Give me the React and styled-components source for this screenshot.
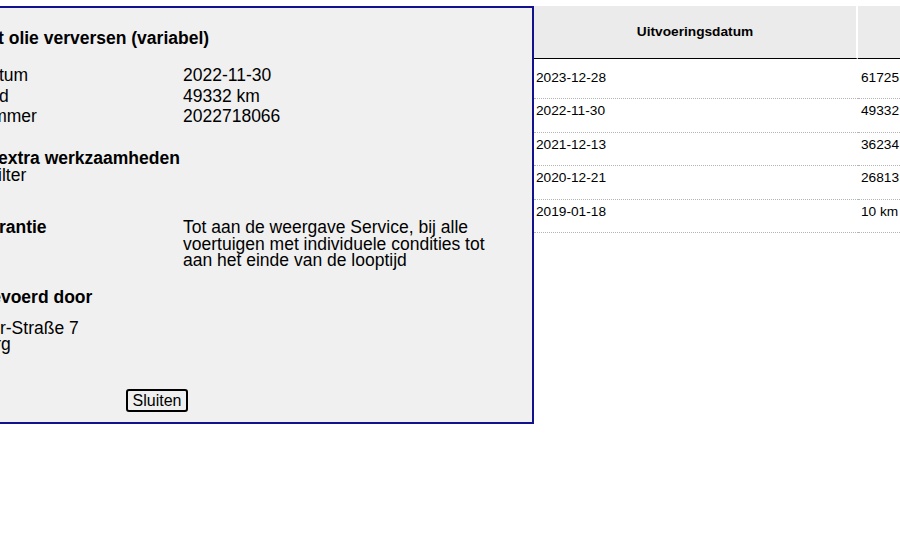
import React from 'react';
import styled, { createGlobalStyle } from 'styled-components';

const GlobalStyle = createGlobalStyle`
  html, body {
    margin: 0;
    padding: 0;
    overflow: hidden;
    background: #ffffff;
    font-family: "Liberation Sans", Arial, sans-serif;
    color: #000;
  }
`;

const Page = styled.div`
  position: relative;
  width: 900px;
  height: 538px;
  padding-top: 6px;
  box-sizing: border-box;
  overflow: hidden;
`;

const Table = styled.table`
  table-layout: fixed;
  width: 1200px;
  border-collapse: separate;
  border-spacing: 0;
  font-size: 13.7px;
  line-height: 14px;
`;

const Th = styled.th`
  height: 52px;
  padding: 0 3px;
  background: #ebebeb;
  border-right: 2px solid #ffffff;
  border-bottom: 1px solid #000000;
  font-weight: bold;
  text-align: center;
  vertical-align: middle;
`;

const Td = styled.td`
  padding: ${(p) => (p.$first ? '12px 3px 13px 2px' : '5px 3px 13.5px 2px')};
  border-bottom: 1px dotted #b4b4b4;
  text-align: left;
  vertical-align: top;
  white-space: nowrap;
  overflow: hidden;
  &:nth-child(3) {
    padding-left: 3px;
  }
`;

const Dialog = styled.div`
  position: absolute;
  top: 6px;
  left: -220px;
  width: 754px;
  box-sizing: border-box;
  border: 2px solid #12128e;
  background: #f0f0f0;
  padding: 20px 0 10px;
  font-size: 17.5px;
  line-height: 16.5px;
`;

const Body = styled.div`
  padding: 0 39px 0 110px;
`;

const Title = styled.h3`
  margin: 0 0 19px;
  font-size: 17.5px;
  line-height: 20px;
  font-weight: bold;
`;

const InfoGrid = styled.div`
  display: grid;
  grid-template-columns: 291px 310px;
  row-gap: 4px;
  margin-top: ${(p) => p.$top || 0}px;
`;

const Label = styled.div`
  font-weight: ${(p) => (p.$bold ? 'bold' : 'normal')};
`;

const Section = styled.div`
  margin-top: ${(p) => p.$top}px;
`;

const Heading = styled.div`
  font-weight: bold;
`;

const Address = styled.div`
  margin-top: 14.5px;
`;

const Footer = styled.div`
  display: flex;
  justify-content: center;
  margin-top: 36.5px;
`;

const Button = styled.button`
  font-family: "Liberation Sans", Arial, sans-serif;
  font-size: 16px;
  line-height: 19px;
  padding: 0 5px;
  margin: 0;
  border: 2px solid #000;
  border-radius: 3px;
  background: #efefef;
  color: #000;
  cursor: pointer;
`;

const history = [
  { date: '2023-12-28', km: '61725 km', type: 'Service B' },
  { date: '2022-11-30', km: '49332 km', type: 'Inspectie met olie verversen (variabel)' },
  { date: '2021-12-13', km: '36234 km', type: 'Service A' },
  { date: '2020-12-21', km: '26813 km', type: 'Service B' },
  { date: '2019-01-18', km: '10 km', type: 'Afleveringsinspectie' },
];

const details = [
  ['Uitvoeringsdatum', '2022-11-30'],
  ['Kilometerstand', '49332 km'],
  ['Referentienummer', '2022718066'],
];

export default function App() {
  return (
    <>
      <GlobalStyle />
      <Page>
        <Table>
          <colgroup>
            <col style={{ width: 534 }} />
            <col style={{ width: 324 }} />
            <col style={{ width: 342 }} />
          </colgroup>
          <thead>
            <tr>
              <Th>Omschrijving</Th>
              <Th>Uitvoeringsdatum</Th>
              <Th>Kilometerstand</Th>
            </tr>
          </thead>
          <tbody>
            {history.map((row, i) => (
              <tr key={row.date}>
                <Td $first={i === 0}>{row.type}</Td>
                <Td $first={i === 0}>{row.date}</Td>
                <Td $first={i === 0}>{row.km}</Td>
              </tr>
            ))}
          </tbody>
        </Table>

        <Dialog>
          <Body>
            <Title>Inspectie met olie verversen (variabel)</Title>
            <InfoGrid>
              {details.map(([label, value]) => (
                <React.Fragment key={label}>
                  <Label>{label}</Label>
                  <div>{value}</div>
                </React.Fragment>
              ))}
            </InfoGrid>

            <Section $top={25.5}>
              <Heading>Uitgevoerde extra werkzaamheden</Heading>
              <div>Interieurluchtfilter</div>
            </Section>

            <InfoGrid $top={36}>
              <Label $bold>Mobiliteitsgarantie</Label>
              <div>
                Tot aan de weergave Service, bij alle voertuigen met individuele condities tot aan het
                einde van de looptijd
              </div>
            </InfoGrid>

            <Section $top={20}>
              <Heading>Service uitgevoerd door</Heading>
              <Address>
                <div>Gottlieb-Müller-Straße 7</div>
                <div>79108 Freiburg</div>
              </Address>
            </Section>
          </Body>
          <Footer>
            <Button type="button">Sluiten</Button>
          </Footer>
        </Dialog>
      </Page>
    </>
  );
}
